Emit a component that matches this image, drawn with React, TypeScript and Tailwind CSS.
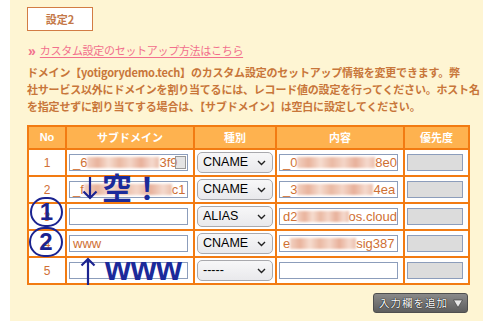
import React from "react";

const jp = { fontFamily: '"Noto Sans CJK JP", "Noto Sans", sans-serif' };
const lat = { fontFamily: '"Liberation Sans", Arial, sans-serif' };

function Blur({ w }: { w: number }) {
  return (
    <span
      className="inline-block h-[11px] align-middle blur-[1px]"
      style={{ width: w, background: "linear-gradient(90deg, #f3d2c2 0%, #e9b39c 15%, #f6ddd0 30%, #eab9a3 45%, #f4d6c8 60%, #e8b09a 75%, #f5dace 90%, #ecbfac 100%)" }}
    />
  );
}

function Field({ w, children, gray }: { w: number; children?: React.ReactNode; gray?: boolean }) {
  return (
    <div
      className={`relative h-[17px] border border-[#8c9dbb] flex items-center overflow-hidden whitespace-nowrap pl-[3px] text-[13px] text-[#cf6f33] ${gray ? "bg-[#dcdcdc]" : "bg-white"}`}
      style={{ width: w, ...lat }}
    >
      {children}
    </div>
  );
}

function Sel({ label }: { label: string }) {
  return (
    <div
      className="h-[21px] w-[76px] rounded-[5px] border border-[#a9a9ad] bg-gradient-to-b from-[#f7f7f8] to-[#e9e9ec] flex items-center justify-between pl-[5px] pr-[6px] text-[12.5px] text-black"
      style={lat}
    >
      <span>{label}</span>
      <svg width="9" height="6" viewBox="0 0 9 6">
        <path d="M1 1l3.5 3.5L8 1" fill="none" stroke="#222" strokeWidth="1.4" />
      </svg>
    </div>
  );
}

const td = "border-2 border-[#f27b12] p-0 align-middle";

export default function App() {
  const rows = [
    {
      n: "1",
      sub: (
        <>
          <span>_6</span>
          <Blur w={72} />
          <span>3f9</span>
          <span className="absolute right-[1px] top-[1px] w-[11px] h-[13px] border border-[#999] bg-[#bbb]/40" />
        </>
      ),
      type: "CNAME",
      content: (
        <>
          <span>_0</span>
          <Blur w={80} />
          <span>8e0</span>
        </>
      ),
    },
    {
      n: "2",
      sub: (
        <>
          <span>_f</span>
          <Blur w={88} />
          <span>c1</span>
        </>
      ),
      type: "CNAME",
      content: (
        <>
          <span>_3</span>
          <Blur w={76} />
          <span>4ea</span>
        </>
      ),
    },
    {
      n: "3",
      sub: null,
      type: "ALIAS",
      content: (
        <>
          <span>d2</span>
          <Blur w={68} />
          <span>os.cloud</span>
        </>
      ),
    },
    {
      n: "4",
      sub: <span>www</span>,
      type: "CNAME",
      content: (
        <>
          <span>e</span>
          <Blur w={66} />
          <span>sig387</span>
        </>
      ),
    },
    { n: "5", sub: null, type: "-----", content: null },
  ];

  return (
    <div className="w-[493px] h-[323px] bg-white overflow-hidden">
      <div className="relative ml-[10px] w-[473px] h-[321px] bg-[#fef5d3] pl-[17px] pt-[7px]" style={jp}>
        <div className="w-[66px] h-[24px] border-[1.5px] border-[#d27c45] bg-white flex items-center justify-center text-[11px] font-bold text-[#c47848]">
          設定2
        </div>

        <div className="mt-[11px] h-[17px] flex items-center text-[#f2708d]">
          <span className="font-bold text-[14px] leading-none mr-[4px] ml-[1px]" style={lat}>»</span>
          <span className="text-[11px] tracking-[-0.3px] underline underline-offset-2 decoration-[1px]">カスタム設定のセットアップ方法はこちら</span>
        </div>

        <p className="mt-[5px] text-[11px] leading-[17px] font-bold tracking-[-0.2px] text-[#c8763a] whitespace-nowrap">
          ドメイン【yotigorydemo.tech】のカスタム設定のセットアップ情報を変更できます。弊
          <br />
          社サービス以外にドメインを割り当てるには、レコード値の設定を行ってください。ホスト名
          <br />
          を指定せずに割り当てする場合は、【サブドメイン】は空白に設定してください。
        </p>

        <table className="mt-[10px] border-collapse table-fixed w-[441px]">
          <colgroup>
            <col className="w-[38px]" />
            <col className="w-[128px]" />
            <col className="w-[82px]" />
            <col className="w-[128px]" />
            <col className="w-[65px]" />
          </colgroup>
          <thead>
            <tr className="h-[23px] bg-[#feb24f] text-white text-[11px] font-bold">
              <th className={td} style={lat}>No</th>
              <th className={td}>サブドメイン</th>
              <th className={td}>種別</th>
              <th className={td}>内容</th>
              <th className={td}>優先度</th>
            </tr>
          </thead>
          <tbody>
            {rows.map((r) => (
              <tr key={r.n} className="h-[27px] bg-white">
                <td className={`${td} text-center text-[12px] text-[#d06f35]`} style={lat}>{r.n}</td>
                <td className={`${td} pl-[2px]`}>
                  <Field w={119}>{r.sub}</Field>
                </td>
                <td className={`${td} pl-[2px]`}>
                  <Sel label={r.type} />
                </td>
                <td className={`${td} pl-[2px]`}>
                  <Field w={119}>{r.content}</Field>
                </td>
                <td className={`${td} pl-[2px]`}>
                  <Field w={56} gray />
                </td>
              </tr>
            ))}
          </tbody>
        </table>

        <div className="w-[441px] flex justify-end mt-[8px]">
          <div className="h-[20px] w-[95px] rounded-[3px] border border-[#4f4f4f] bg-gradient-to-b from-[#8a8a8a] to-[#5e5e5e] flex items-center justify-between pl-[5px] pr-[4px] whitespace-nowrap">
            <span
              className="text-[10.5px] tracking-[1px] text-white leading-none"
              style={{ textShadow: "0 0 1px #000, 0 0 1px #000" }}
            >
              入力欄を追加
            </span>
            <svg width="10" height="9" viewBox="0 0 10 9">
              <path d="M0.5 1h9L5 8.5z" fill="#e9e9e9" stroke="#333" strokeWidth="0.6" />
            </svg>
          </div>
        </div>

        {/* annotations */}
        <div className="absolute left-[20px] top-[197px] w-[33px] h-[30px] rounded-full border-2 border-[#1b2390] flex items-center justify-center text-[24px] font-bold text-[#1b2390] leading-none" style={lat}>
          1
        </div>
        <div className="absolute left-[19px] top-[227px] w-[34px] h-[30px] rounded-full border-2 border-[#1b2390] flex items-center justify-center text-[24px] font-bold text-[#1b2390] leading-none" style={lat}>
          2
        </div>

        <svg className="absolute left-[72px] top-[176px]" width="16" height="24" viewBox="0 0 16 24">
          <path d="M8 1v21M1.5 15.5L8 22l6.5-6.5" fill="none" stroke="#1b2390" strokeWidth="2.2" />
        </svg>
        <div className="absolute left-[92px] top-[171px] text-[30px] font-bold text-[#1b2a9a] leading-none whitespace-nowrap" style={jp}>
          空！
        </div>

        <svg className="absolute left-[70px] top-[257px]" width="16" height="29" viewBox="0 0 16 29">
          <path d="M8 28V2M1.5 8.5L8 2l6.5 6.5" fill="none" stroke="#1b2390" strokeWidth="2.2" />
        </svg>
        <div className="absolute left-[95px] top-[252px] text-[33px] font-bold text-[#1b2a9a] leading-none whitespace-nowrap" style={lat}>
          www
        </div>
      </div>
    </div>
  );
}
